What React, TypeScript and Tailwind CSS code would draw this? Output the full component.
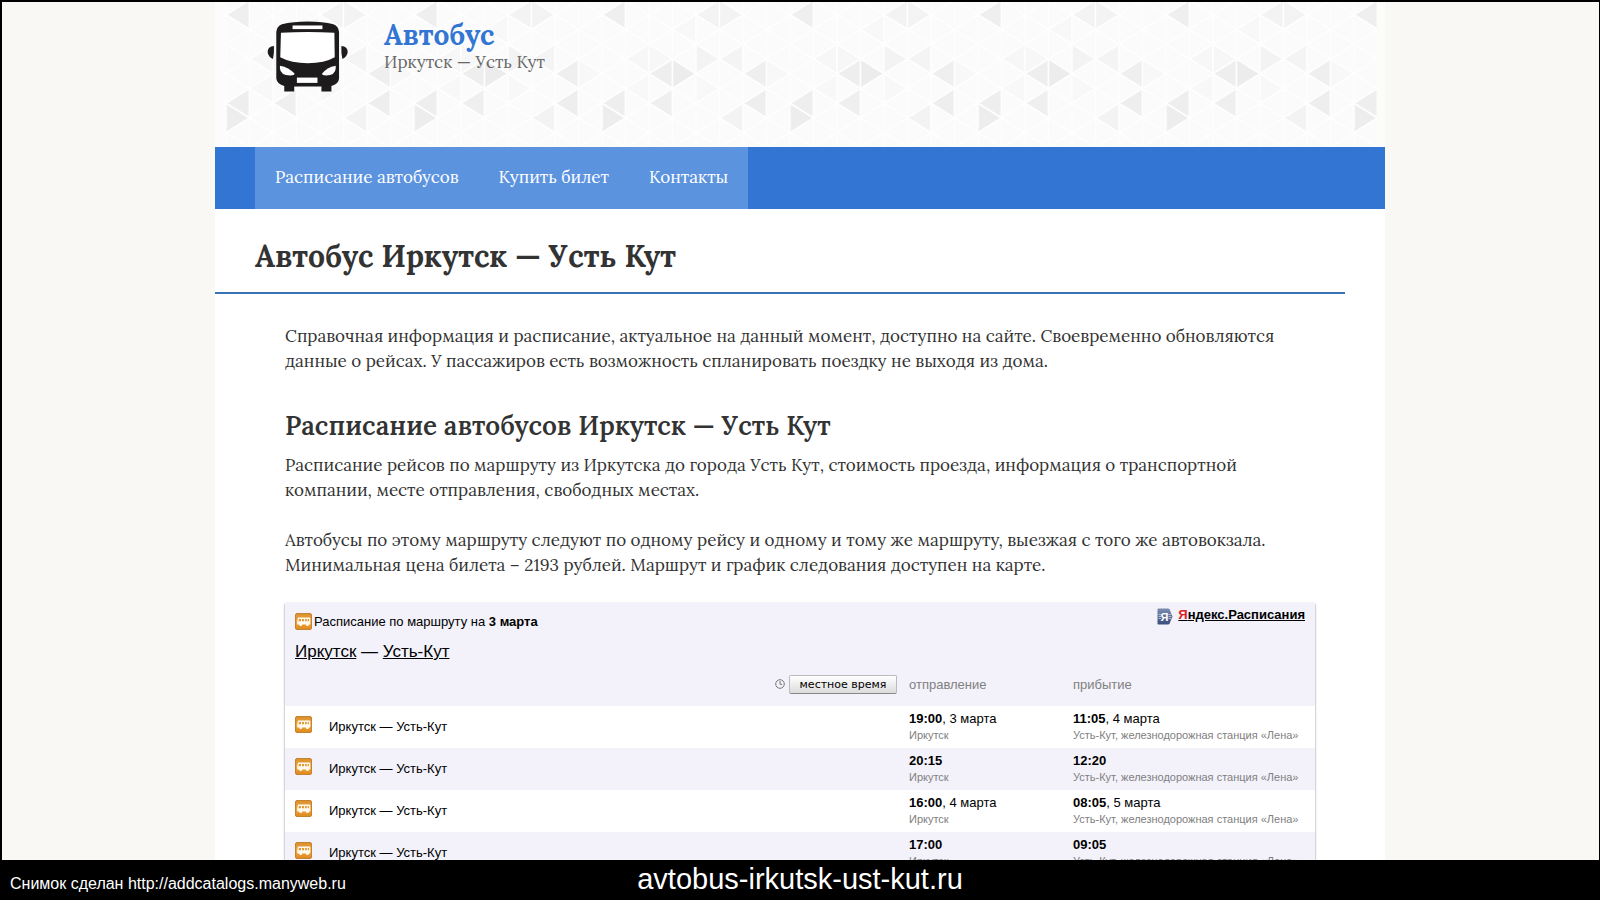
const NAV_LINKS = ['Расписание автобусов', 'Купить билет', 'Контакты'];

const TRIPS = [
  { departure: '19:00', departureDate: '3 марта', arrival: '11:05', arrivalDate: '4 марта' },
  { departure: '20:15', arrival: '12:20' },
  { departure: '16:00', departureDate: '4 марта', arrival: '08:05', arrivalDate: '5 марта' },
  { departure: '17:00', arrival: '09:05' },
];

// Header background: a triangular grid, 8 columns wide
const COL = 23.5;
const ROW = 29.5;

// column, row and direction of the shaded triangles
const SHADES: Record<string, string> = {
  '0-0.5-l': '#efefef',
  '4-0.5-l': '#f4f3f3',
  '5-0.5-r': '#f4f3f3',
  '4-2-r': '#f3f3f3',
  '5-2-l': '#f4f4f4',
  '1-2-l': '#f7f7f7',
  '2-2-r': '#f7f7f7',
  '2-2.5-l': '#eeeeee',
  '3-2.5-r': '#ececec',
  '6-2.5-l': '#efefef',
  '0-3.5-l': '#eeeeee',
  '0-4-r': '#ededed',
  '2-3.5-l': '#efefef',
  '6-3.5-l': '#eeeeee',
  '5-4-l': '#f3f3f3',
  '3-1-l': '#f8f8f8',
  '4-3-r': '#f8f8f8',
  '7-2.5-r': '#f8f8f8',
  '1-3-l': '#f8f8f8',
};

function buildTriangles() {
  const list: { key: string; points: string; fill: string }[] = [];
  for (let col = 0; col < 8; col++) {
    const x = col * COL;
    for (let half = -1; half <= 11; half++) {
      const y = (half / 2) * ROW;
      const dir = (col + half) % 2 === 0 ? 'r' : 'l';
      const key = `${col}-${half / 2}-${dir}`;
      const base = dir === 'l' ? x + COL : x;
      const apex = dir === 'l' ? x : x + COL;
      list.push({
        key,
        points: `${apex},${y} ${base},${y - ROW / 2} ${base},${y + ROW / 2}`,
        fill: SHADES[key] || '#fbfbfb',
      });
    }
  }
  return list;
}

const TRIANGLES = buildTriangles();

function HeaderPattern() {
  return (
    <svg className="w-full h-full" aria-hidden="true">
      <defs>
        <pattern id="triangles" x="3" y="-2" width="188" height="160" patternUnits="userSpaceOnUse">
          {TRIANGLES.map((t) => (
            <polygon key={t.key} points={t.points} fill={t.fill} stroke="#fefefe" strokeWidth="1.5" />
          ))}
        </pattern>
      </defs>
      <rect width="100%" height="100%" fill="url(#triangles)" />
    </svg>
  );
}

function BusLogo() {
  return (
    <svg viewBox="22 17 244 213" className="w-[81px] h-[71px]" role="img" aria-label="Автобус">
      <path
        fill="#1d1b1c"
        d="M50 50Q51 32 67 26Q100 18 145 18Q190 18 222 26Q238 32 239 50V190Q238 207 216 212V229H186V214H104V229H74V212Q52 207 50 190Z"
      />
      <path fill="#1d1b1c" d="M43 92Q24 94 24 110Q25 124 40 131Q44 112 43 92Z" />
      <path fill="#1d1b1c" d="M246 92Q265 94 265 110Q264 124 249 131Q245 112 246 92Z" />
      <rect x="99" y="30" width="90" height="11" fill="#fff" />
      <path fill="#fff" d="M64 52Q145 47 225 52L226 126Q195 144 145 144Q95 144 62 126Z" />
      <path fill="#fff" d="M61 151Q88 156 105 175Q106 181 92 181Q62 180 61 160Z" />
      <path fill="#fff" d="M229 151Q202 156 188 175Q187 181 200 181Q228 180 229 160Z" />
      <rect x="112" y="187" width="62" height="16" fill="#fff" />
    </svg>
  );
}

function TransportIcon({ className = '' }: { className?: string }) {
  return (
    <svg viewBox="0 0 17 17" className={`w-[17px] h-[17px] shrink-0 ${className}`} aria-hidden="true">
      <defs>
        <linearGradient id="orange" x1="0" y1="0" x2="0" y2="1">
          <stop offset="0" stopColor="#d8902f" />
          <stop offset="0.5" stopColor="#f0a53a" />
          <stop offset="1" stopColor="#dc8a20" />
        </linearGradient>
      </defs>
      <rect x="0.5" y="0.5" width="16" height="16" rx="1.5" fill="url(#orange)" stroke="#c8812c" />
      <path fill="#fffaf0" d="M3 4.500h11.500q.8 0 .8.8v6.200h-1.400a1.500 1.500 0 0 1-3 0H7.200a1.500 1.500 0 0 1-3 0H2.200V8.500z" />
      <path fill="#e39a35" d="M4 6h2v2.300H3.400zM7 6h2v2.300H7zM10 6h1.800v2.300H10zM12.700 6H14v2.300h-1.300z" />
    </svg>
  );
}

function YandexIcon() {
  return (
    <svg viewBox="0 0 16 17" className="w-4 h-[17px]" aria-hidden="true">
      <defs>
        <linearGradient id="tag" x1="0" y1="0" x2="0" y2="1">
          <stop offset="0" stopColor="#7d8cb0" />
          <stop offset="1" stopColor="#3c4c7c" />
        </linearGradient>
      </defs>
      <path d="M1.500.5h9.500q1 0 1.500.8L15.500 8.500l-3 7.200q-.5.800-1.500.800H1.500q-1 0-1-1v-14q0-1 1-1z" fill="url(#tag)" />
      <path d="M1.500 6.500h2.500M1.500 8.500h2.500M1.500 10.500h2.500M11.500 6.500h2.500M11.500 8.500h3M11.500 10.500h2.500" stroke="#c9d0e2" strokeWidth="0.8" />
      <text x="7.500" y="12.500" textAnchor="middle" fill="#fff" fontSize="11" fontFamily="Liberation Sans, sans-serif">Я</text>
    </svg>
  );
}

function ClockIcon() {
  return (
    <svg viewBox="0 0 10 10" className="w-2.5 h-2.5" fill="none" stroke="#777" aria-hidden="true">
      <circle cx="5" cy="5" r="4.3" />
      <path d="M5 2v3.300h2.300" />
    </svg>
  );
}

function Stop({ time, date, place }: { time: string; date?: string; place: string }) {
  return (
    <>
      <div className="text-[13px] leading-4">
        <b>{time}</b>
        {date && `, ${date}`}
      </div>
      <div className="text-[11px] leading-4 text-[#808080] whitespace-nowrap">{place}</div>
    </>
  );
}

function ScheduleWidget() {
  return (
    <div className="bg-[#f3f2fa] text-black font-['Liberation_Sans',Arial,sans-serif] shadow-[0_1px_2px_rgba(0,0,0,0.5)]">
      <div className="flex justify-between items-start px-2.5 h-[61px]">
        <div className="pt-2.5">
          <div className="flex items-center gap-0.5 text-[13px] leading-[17px]">
            <TransportIcon />
            <span>Расписание по маршруту на <b>3 марта</b></span>
          </div>
          <div className="mt-3 text-[17px] leading-5">
            <a href="#irkutsk" className="underline">Иркутск</a> — <a href="#ust-kut" className="underline">Усть-Кут</a>
          </div>
        </div>
        <a href="#yandex" className="flex items-start gap-[5px] pt-[5px] text-[13px] leading-[14px] font-bold">
          <YandexIcon />
          <span className="underline"><span className="text-[#e02020]">Я</span>ндекс.Расписания</span>
        </a>
      </div>

      <table className="w-full table-fixed border-collapse text-left">
        <thead>
          <tr className="h-[42px] text-[13px] text-[#808080]">
            <th scope="col" className="p-0 pr-3 pb-0.5 font-normal">
              <div className="flex items-center justify-end gap-1">
                <ClockIcon />
                <button
                  type="button"
                  className="w-[108px] h-[19px] rounded-xs border border-[#bbb] border-b-[#888] bg-linear-to-b from-white to-[#dcdcdc] font-['DejaVu_Sans',Verdana,sans-serif] text-[11px] leading-none text-black"
                >
                  местное время
                </button>
              </div>
            </th>
            <th scope="col" className="w-[164px] p-0 pb-0.5 font-normal">отправление</th>
            <th scope="col" className="w-[242px] p-0 pb-0.5 font-normal">прибытие</th>
          </tr>
        </thead>
        <tbody>
          {TRIPS.map((trip) => (
            <tr key={trip.departure} className="h-[42px] odd:bg-white">
              <td className="p-0 pl-2.5">
                <div className="flex items-center gap-[17px] text-[13px] leading-4">
                  <TransportIcon className="mb-1.5" />
                  <span>Иркутск — Усть-Кут</span>
                </div>
              </td>
              <td className="p-0">
                <Stop time={trip.departure} date={trip.departureDate} place="Иркутск" />
              </td>
              <td className="p-0">
                <Stop time={trip.arrival} date={trip.arrivalDate} place="Усть-Кут, железнодорожная станция «Лена»" />
              </td>
            </tr>
          ))}
        </tbody>
      </table>
    </div>
  );
}

export default function App() {
  return (
    <div className="h-screen flex flex-col bg-[#f9f8f4] text-[#333] font-['Lora',serif] text-[17px] leading-[25px]">
      <div className="flex-1 min-h-0 overflow-hidden border-t-2 border-l-2 border-r border-black pr-px">
        <div className="max-w-[1170px] min-h-full mx-auto bg-white">
          <header className="relative h-[145px] bg-[#fcfcfb]">
            <div className="absolute inset-y-0 inset-x-2">
              <HeaderPattern />
            </div>
            <div className="relative flex items-start gap-9 pl-[52px] pt-[19px]">
              <BusLogo />
              <div>
                <a href="#home" className="block text-[28px] leading-7 font-bold text-[#3275d3]">Автобус</a>
                <p className="text-[#686868] leading-[26px]">Иркутск — Усть Кут</p>
              </div>
            </div>
          </header>

          <nav className="flex h-[62px] px-10 bg-[#3275d3]">
            {NAV_LINKS.map((link) => (
              <a key={link} href="#nav" className="flex items-center px-5 pb-0.5 bg-[#5c93df] text-white">
                {link}
              </a>
            ))}
          </nav>

          <main>
            <div className="mr-10 pl-10 pt-[27px] pb-4 border-b-2 border-[#3a73b5]">
              <h1 className="text-[30px] leading-10 font-bold">Автобус Иркутск — Усть Кут</h1>
            </div>

            <div className="px-[70px] pt-[30px]">
              <p>
                Справочная информация и расписание, актуальное на данный момент, доступно на сайте. Своевременно обновляются
                данные о рейсах. У пассажиров есть возможность спланировать поездку не выходя из дома.
              </p>
              <h2 className="mt-[34px] mb-2.5 text-[26px] leading-[35px] font-semibold">Расписание автобусов Иркутск — Усть Кут</h2>
              <p className="mb-[25px]">
                Расписание рейсов по маршруту из Иркутска до города Усть Кут, стоимость проезда, информация о транспортной
                компании, месте отправления, свободных местах.
              </p>
              <p className="mb-[25px]">
                Автобусы по этому маршруту следуют по одному рейсу и одному и тому же маршруту, выезжая с того же автовокзала.
                Минимальная цена билета – 2193 рублей. Маршрут и график следования доступен на карте.
              </p>
              <ScheduleWidget />
            </div>
          </main>
        </div>
      </div>

      <footer className="grid grid-cols-3 items-baseline h-10 shrink-0 px-2.5 bg-black text-white font-['Liberation_Sans',Arial,sans-serif]">
        <span className="text-base">Снимок сделан http://addcatalogs.manyweb.ru</span>
        <span className="text-center text-[29px] leading-[38px]">avtobus-irkutsk-ust-kut.ru</span>
      </footer>
    </div>
  );
}
